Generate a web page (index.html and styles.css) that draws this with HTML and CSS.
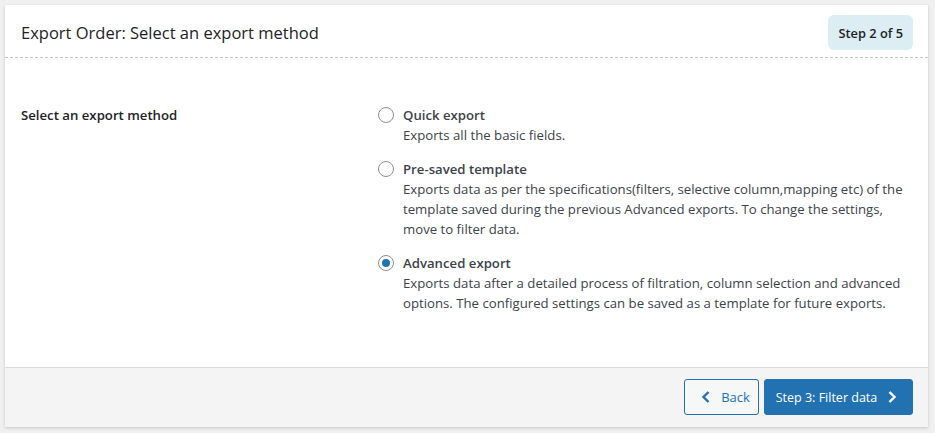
FILE: index.html
```html
<!DOCTYPE html>
<html lang="en">
<head>
<meta charset="utf-8">
<title>Export Order</title>
<link rel="stylesheet" href="styles.css">
</head>
<body>
<div class="card">
  <div class="card-header">
    <h2 class="title">Export Order: Select an export method</h2>
    <span class="step-badge">Step 2 of 5</span>
  </div>
  <div class="card-body">
    <div class="field-label">Select an export method</div>
    <div class="options">
      <label class="option">
        <input type="radio" name="method" class="radio">
        <span class="option-text">
          <span class="option-title">Quick export</span>
          <span class="option-desc">Exports all the basic fields.</span>
        </span>
      </label>
      <label class="option">
        <input type="radio" name="method" class="radio">
        <span class="option-text">
          <span class="option-title">Pre-saved template</span>
          <span class="option-desc">Exports data as per the specifications(filters, selective column,mapping etc) of the template saved during the previous Advanced exports. To change the settings, move to filter data.</span>
        </span>
      </label>
      <label class="option">
        <input type="radio" name="method" class="radio" checked>
        <span class="option-text">
          <span class="option-title">Advanced export</span>
          <span class="option-desc">Exports data after a detailed process of filtration, column selection and advanced options. The configured settings can be saved as a template for future exports.</span>
        </span>
      </label>
    </div>
  </div>
  <div class="card-footer">
    <button class="btn btn-secondary" type="button">
      <svg class="chev" width="10" height="14" viewBox="0 0 10 14"><path d="M7.5 2 L2.5 7 L7.5 12" fill="none" stroke="currentColor" stroke-width="2.4"/></svg>
      <span>Back</span>
    </button>
    <button class="btn btn-primary" type="button">
      <span>Step 3: Filter data</span>
      <svg class="chev" width="10" height="14" viewBox="0 0 10 14"><path d="M2.5 2 L7.5 7 L2.5 12" fill="none" stroke="currentColor" stroke-width="2.4"/></svg>
    </button>
  </div>
</div>
</body>
</html>
```

FILE: styles.css
```css
* { box-sizing: border-box; }
html, body { margin: 0; padding: 0; }
body {
  background: #f0f0f1;
  font-family: "Open Sans", "Noto Sans", sans-serif;
  font-size: 13.2px;
  color: #3c434a;
  padding: 5px 7px 6px 5px;
}
.card {
  background: #fff;
  box-shadow: 0 1px 3px rgba(0,0,0,0.18);
  height: 422px;
  display: flex;
  flex-direction: column;
}
.card-header {
  display: flex;
  align-items: center;
  justify-content: space-between;
  padding: 10px 15px 7px 16px;
  border-bottom: 1px dashed #c3c4c7;
}
.title {
  margin: 0;
  font-size: 16.5px;
  font-weight: 400;
  color: #1d2327;
  line-height: 34px;
}
.step-badge {
  display: inline-flex;
  align-items: center;
  height: 35px;
  padding: 0 10px 0 11px;
  background: #dcedf4;
  border-radius: 6px;
  font-weight: 600;
  font-size: 12.8px;
  color: #1d2327;
}
.card-body {
  flex: 1;
  display: flex;
  padding: 47px 16px 0 16px;
}
.field-label {
  width: 357px;
  flex-shrink: 0;
  font-weight: 600;
  color: #1d2327;
  line-height: 20px;
}
.options {
  display: flex;
  flex-direction: column;
  gap: 14px;
  max-width: 535px;
}
.option {
  display: flex;
  gap: 9px;
  align-items: flex-start;
}
.radio {
  appearance: none;
  -webkit-appearance: none;
  margin: 2px 0 0 0;
  width: 16px;
  height: 16px;
  border: 1px solid #8c8f94;
  border-radius: 50%;
  background: #fff;
  flex-shrink: 0;
  display: grid;
  place-items: center;
}
.radio:checked::before {
  content: "";
  width: 8px;
  height: 8px;
  border-radius: 50%;
  background: #2271b1;
}
.option-text {
  display: flex;
  flex-direction: column;
}
.option-title {
  font-weight: 600;
  color: #3c434a;
  line-height: 20px;
}
.option-desc {
  line-height: 20px;
}
.card-footer {
  background: #f4f4f4;
  border-top: 1px solid #dcdcde;
  height: 60px;
  display: flex;
  justify-content: flex-end;
  align-items: center;
  gap: 5px;
  padding: 0 15px 1px 0;
}
.btn {
  height: 36px;
  border-radius: 3px;
  font-family: inherit;
  font-size: 13px;
  display: inline-flex;
  align-items: center;
  cursor: pointer;
}
.btn-secondary {
  width: 75px;
  justify-content: center;
  gap: 10px;
  background: #f6f7f7;
  color: #2271b1;
  border: 1px solid #2271b1;
  padding: 0 2px 0 10px;
}
.btn-primary {
  width: 149px;
  justify-content: center;
  gap: 10px;
  background: #2271b1;
  color: #fff;
  border: 1px solid #2271b1;
  font-size: 12.5px;
  font-weight: 500;
  padding: 0 8px 0 4px;
}
.chev { display: block; }
```
